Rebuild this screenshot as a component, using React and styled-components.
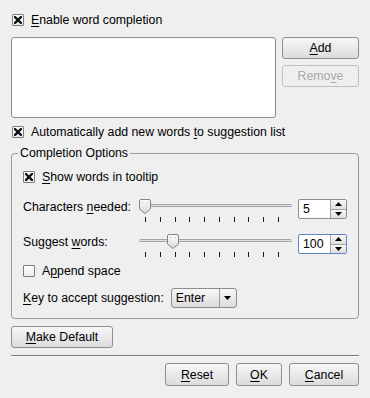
import React from "react";
import styled, { createGlobalStyle } from "styled-components";

const GlobalStyle = createGlobalStyle`
  body {
    margin: 0;
    background: #efefef;
    font-family: "Liberation Sans", Arial, sans-serif;
    font-size: 12.3px;
    color: #000;
  }
`;

const Window = styled.div`
  width: 370px;
  height: 398px;
  box-sizing: border-box;
  padding: 10px 11px 0;
  display: flex;
  flex-direction: column;
  background: #efefef;
`;

const U = styled.span`
  text-decoration: underline;
  text-underline-offset: 2px;
`;

const CheckRow = styled.div`
  display: flex;
  align-items: center;
  gap: 7px;
  height: 20px;
  margin-top: ${(p) => p.$top || 0}px;
  padding-left: ${(p) => p.$indent || 0}px;
  white-space: nowrap;
`;

const Box = styled.span`
  width: 12px;
  height: 12px;
  box-sizing: border-box;
  border: 1px solid #7d7d7d;
  border-radius: 1px;
  background: linear-gradient(#ffffff, #ececec);
  display: flex;
  align-items: center;
  justify-content: center;
  flex: none;
`;

const CheckBox = ({ checked }) => (
  <Box>
    {checked && (
      <svg width="8" height="8" viewBox="0 0 8 8">
        <path d="M1 1L7 7M7 1L1 7" stroke="#111" strokeWidth="2.4" strokeLinecap="square" />
      </svg>
    )}
  </Box>
);

const ListArea = styled.div`
  display: flex;
  gap: 6px;
  margin-top: 7px;
  height: 81px;
`;

const WordList = styled.div`
  width: 265px;
  box-sizing: border-box;
  background: #fff;
  border: 1px solid #8c8c8c;
  border-radius: 3px;
`;

const ButtonColumn = styled.div`
  display: flex;
  flex-direction: column;
  gap: 6px;
  width: 77px;
`;

const Button = styled.div`
  width: ${(p) => p.$w}px;
  height: ${(p) => p.$h || 22}px;
  box-sizing: border-box;
  display: flex;
  align-items: center;
  justify-content: center;
  border: 1px solid ${(p) => (p.$disabled ? "#c0c0c0" : "#8e8e8e")};
  border-radius: 3px;
  color: ${(p) => (p.$disabled ? "#a8a8a8" : "#000")};
  background: ${(p) =>
    p.$disabled ? "#efefef" : "linear-gradient(#f7f7f7, #e9e9e9 50%, #dcdcdc)"};
  flex: none;
`;

const ButtonRow = styled.div`
  display: flex;
  margin-top: 7px;
`;

const Group = styled.fieldset`
  margin: 4px 0 0;
  padding: 7px 11px 10px;
  border: 1px solid #9a9a9a;
  border-radius: 4px;
  min-width: 0;
`;

const Legend = styled.legend`
  padding: 0 2px;
  margin-left: -5px;
  line-height: 14px;
`;

const SliderRow = styled.div`
  display: grid;
  grid-template-columns: 116px 159px 49px;
  align-items: start;
  margin-top: ${(p) => p.$top}px;
`;

const RowLabel = styled.div`
  line-height: 17px;
  white-space: nowrap;
`;

const SliderBox = styled.div`
  position: relative;
  height: 23px;
  margin-right: 6px;
`;

const Groove = styled.div`
  margin-top: 5px;
  height: 3px;
  box-sizing: border-box;
  border: 1px solid #a4a4a4;
  border-radius: 2px;
  background: #e2e2e2;
`;

const Ticks = styled.div`
  display: flex;
  justify-content: space-between;
  padding: 0 13px 0 6px;
  margin-top: 10px;
`;

const Tick = styled.span`
  width: 1px;
  height: 5px;
  background: #1a1a1a;
`;

const Handle = styled.svg`
  position: absolute;
  top: 0;
`;

const Slider = ({ offset }) => (
  <SliderBox>
    <Groove />
    <Ticks>
      {Array.from({ length: 10 }).map((_, i) => (
        <Tick key={i} />
      ))}
    </Ticks>
    <Handle width="12" height="15" viewBox="0 0 12 15" style={{ left: offset }}>
      <defs>
        <linearGradient id="hg" x1="0" y1="0" x2="0" y2="1">
          <stop offset="0" stopColor="#fdfdfd" />
          <stop offset="1" stopColor="#d9d9d9" />
        </linearGradient>
      </defs>
      <path
        d="M2 0.5H10Q11.5 0.5 11.5 2V10L6 14.5L0.5 10V2Q0.5 0.5 2 0.5Z"
        fill="url(#hg)"
        stroke="#858585"
      />
      <rect x="3" y="3" width="1" height="1" fill="#b5b5b5" />
      <rect x="8" y="3" width="1" height="1" fill="#b5b5b5" />
    </Handle>
  </SliderBox>
);

const Spin = styled.div`
  display: flex;
  width: 49px;
  height: 20px;
  box-sizing: border-box;
  background: #fff;
  border: 1px solid ${(p) => (p.$focus ? "#5b86c6" : "#8c8c8c")};
  border-radius: 2px;
  overflow: hidden;
`;

const SpinText = styled.div`
  flex: 1;
  padding-left: 4px;
  line-height: 18px;
`;

const SpinButtons = styled.div`
  width: 15px;
  display: flex;
  flex-direction: column;
  border-left: 1px solid #a0a0a0;
`;

const SpinHalf = styled.div`
  flex: 1;
  display: flex;
  align-items: center;
  justify-content: center;
  background: linear-gradient(#f8f8f8, #dedede);
  & + & {
    border-top: 1px solid #a0a0a0;
  }
`;

const Arrow = ({ up }) => (
  <svg width="7" height="4" viewBox="0 0 7 4">
    <path d={up ? "M0 4H7L3.5 0Z" : "M0 0H7L3.5 4Z"} fill="#000" />
  </svg>
);

const SpinBox = ({ value, focus }) => (
  <Spin $focus={focus}>
    <SpinText>{value}</SpinText>
    <SpinButtons>
      <SpinHalf>
        <Arrow up />
      </SpinHalf>
      <SpinHalf>
        <Arrow />
      </SpinHalf>
    </SpinButtons>
  </Spin>
);

const KeyRow = styled.div`
  display: flex;
  align-items: center;
  gap: 7px;
  margin-top: 7px;
  white-space: nowrap;
`;

const Combo = styled.div`
  display: flex;
  width: 66px;
  height: 20px;
  box-sizing: border-box;
  border: 1px solid #8e8e8e;
  border-radius: 3px;
  background: linear-gradient(#f7f7f7, #e9e9e9 50%, #dcdcdc);
`;

const ComboText = styled.div`
  flex: 1;
  padding-left: 4px;
  line-height: 18px;
`;

const ComboArrow = styled.div`
  width: 16px;
  border-left: 1px solid #9a9a9a;
  display: flex;
  align-items: center;
  justify-content: center;
`;

const Separator = styled.div`
  margin-top: 7px;
  height: 1px;
  background: #7a7a7a;
  border-bottom: 1px solid #fafafa;
`;

const Footer = styled.div`
  display: flex;
  justify-content: flex-end;
  gap: 7px;
  margin-top: 6px;
`;

export default function App() {
  return (
    <Window>
      <GlobalStyle />
      <CheckRow $indent={1}>
        <CheckBox checked />
        <span>
          <U>E</U>nable word completion
        </span>
      </CheckRow>

      <ListArea>
        <WordList />
        <ButtonColumn>
          <Button $w={77}>
            <span>
              <U>A</U>dd
            </span>
          </Button>
          <Button $w={77} $disabled>
            <span>
              Remo<U>v</U>e
            </span>
          </Button>
        </ButtonColumn>
      </ListArea>

      <CheckRow $indent={1} $top={4}>
        <CheckBox checked />
        <span>
          Automatically add new words <U>t</U>o suggestion list
        </span>
      </CheckRow>

      <Group>
        <Legend>Completion Options</Legend>
        <CheckRow>
          <CheckBox checked />
          <span>
            <U>S</U>how words in tooltip
          </span>
        </CheckRow>

        <SliderRow $top={12}>
          <RowLabel>
            Characters <U>n</U>eeded:
          </RowLabel>
          <Slider offset={0} />
          <SpinBox value="5" />
        </SliderRow>

        <SliderRow $top={12}>
          <RowLabel>
            Suggest <U>w</U>ords:
          </RowLabel>
          <Slider offset={28} />
          <SpinBox value="100" focus />
        </SliderRow>

        <CheckRow $top={4}>
          <CheckBox />
          <span>
            A<U>p</U>pend space
          </span>
        </CheckRow>

        <KeyRow>
          <span>
            <U>K</U>ey to accept suggestion:
          </span>
          <Combo>
            <ComboText>Enter</ComboText>
            <ComboArrow>
              <Arrow />
            </ComboArrow>
          </Combo>
        </KeyRow>
      </Group>

      <ButtonRow>
        <Button $w={102}>
          <span>
            <U>M</U>ake Default
          </span>
        </Button>
      </ButtonRow>

      <Separator />

      <Footer>
        <Button $w={64} $h={23}>
          <span>
            <U>R</U>eset
          </span>
        </Button>
        <Button $w={46} $h={23}>
          <span>
            <U>O</U>K
          </span>
        </Button>
        <Button $w={70} $h={23}>
          <span>
            <U>C</U>ancel
          </span>
        </Button>
      </Footer>
    </Window>
  );
}
